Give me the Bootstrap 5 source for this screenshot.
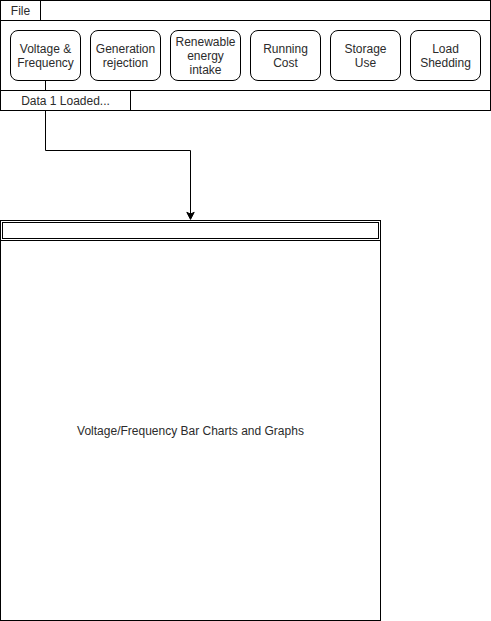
<!DOCTYPE html>
<html lang="en">
<head>
<meta charset="utf-8">
<meta name="viewport" content="width=device-width, initial-scale=1">
<title>Data viewer</title>
<link href="https://cdn.jsdelivr.net/npm/bootstrap@5.3.0/dist/css/bootstrap.min.css" rel="stylesheet">
<style>
  body { font-family: "Liberation Sans", Arial, sans-serif; font-size: 12px; line-height: 14px; color: #2b2b2b; background: #fff; }
  .line { border: 1px solid #000; }
  .line-y { border-top: 1px solid #000; border-bottom: 1px solid #000; }
  .strip { height: 19px; }
  .strip-item { font-size: 12px; line-height: 14px; color: #2b2b2b; background: #fff; border: 0; border-right: 1px solid #000; border-radius: 0; }
  .menu-item { width: 40px; }
  .status-item { width: 130px; }
  .tools { gap: 9px; padding: 9px; }
  .tool { width: 71px; height: 51px; padding: 0; font-size: 12px; line-height: 14px; color: #2b2b2b; background: #fff; border: 1px solid #000; border-radius: 8px; }
  .tool:hover { color: #2b2b2b; background: #eee; border-color: #000; }
  .tool-linked::after { content: ""; position: absolute; top: 100%; left: 34px; width: 1px; height: 10px; background: #000; }
  .viewer { max-width: 381px; }
  .viewer-title { height: 19px; padding: 1px; }
  .viewer-body { min-height: 380px; border-top: 1px solid #000; }
</style>
</head>
<body>
<header class="line">
  <nav class="strip d-flex" aria-label="Menu">
    <button type="button" class="btn strip-item menu-item p-0">File</button>
  </nav>
  <div class="tools line-y d-flex flex-wrap">
    <button type="button" class="btn tool tool-linked position-relative">Voltage &amp;<br>Frequency</button>
    <button type="button" class="btn tool">Generation<br>rejection</button>
    <button type="button" class="btn tool">Renewable<br>energy<br>intake</button>
    <button type="button" class="btn tool">Running<br>Cost</button>
    <button type="button" class="btn tool">Storage<br>Use</button>
    <button type="button" class="btn tool">Load<br>Shedding</button>
  </div>
  <div class="strip d-flex" role="status">
    <div class="strip-item status-item d-flex align-items-center justify-content-center">Data 1 Loaded...</div>
  </div>
</header>
<svg class="d-block" width="200" height="109" viewBox="0 0 200 109" aria-hidden="true">
  <path d="M45.5 0V39.500H190.500V104" fill="none" stroke="#000"/>
  <path d="M190.500 108.400L186.800 101.300L190.500 103.100L194.200 101.300Z" fill="#000" stroke="#000"/>
</svg>
<main class="viewer line d-flex flex-column">
  <div class="viewer-title"><div class="line h-100"></div></div>
  <div class="viewer-body d-flex flex-fill align-items-center justify-content-center">Voltage/Frequency Bar Charts and Graphs</div>
</main>
<script src="https://cdn.jsdelivr.net/npm/bootstrap@5.3.0/dist/js/bootstrap.bundle.min.js"></script>
</body>
</html>
